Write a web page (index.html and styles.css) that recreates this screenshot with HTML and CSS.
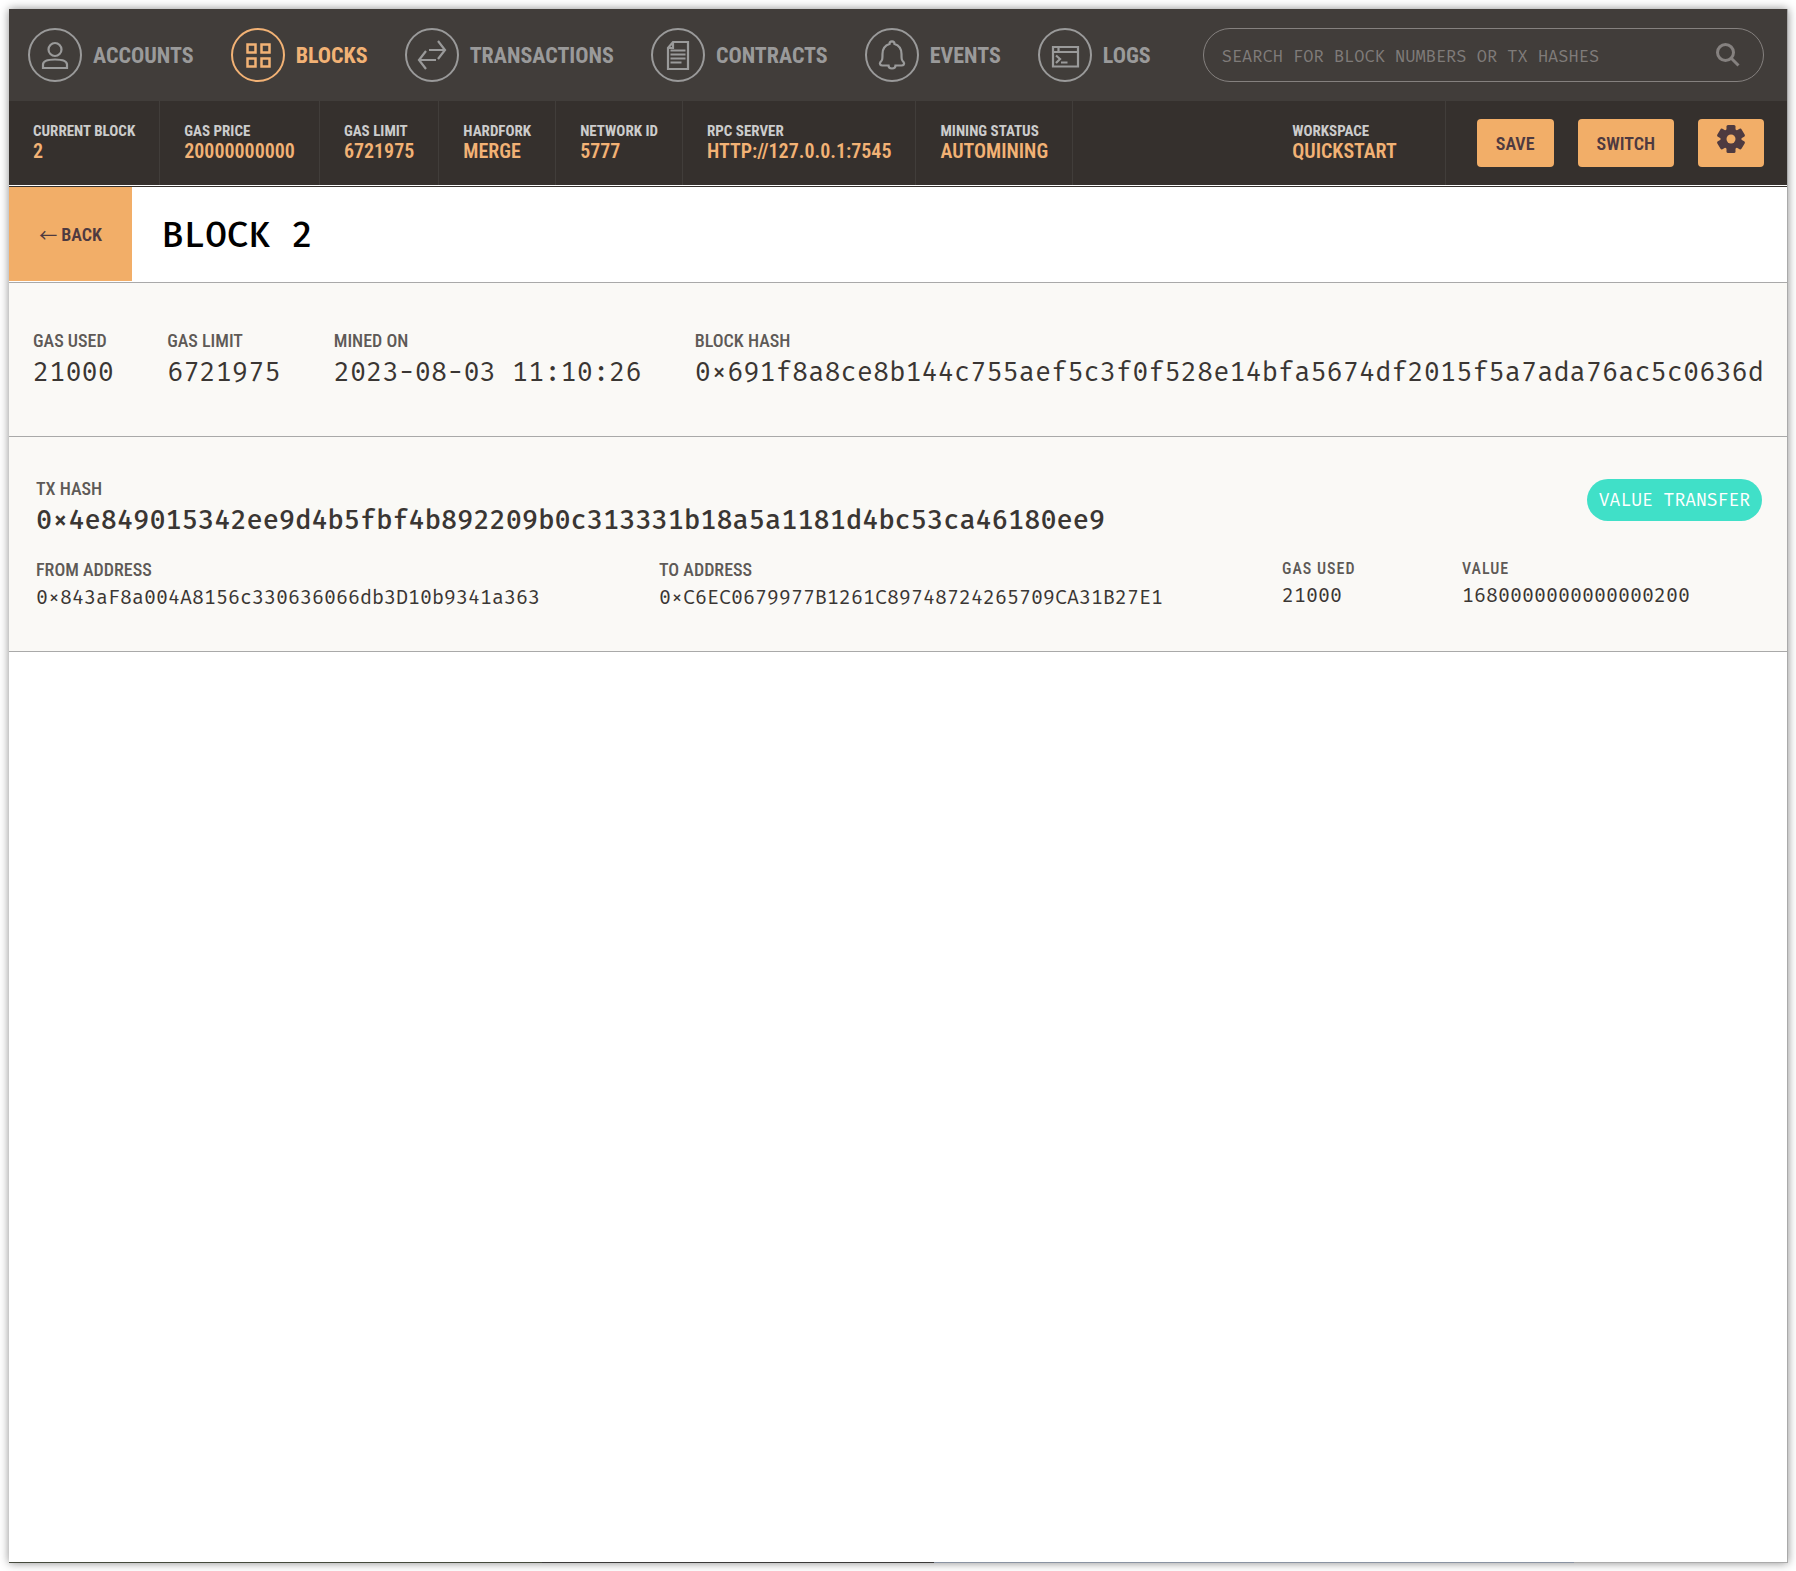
FILE: index.html
```
<!DOCTYPE html>
<html lang="en">
<head>
<meta charset="utf-8">
<title>Block 2</title>
<link rel="stylesheet" href="styles.css">
</head>
<body>
<div class="window">
  <header>
    <nav class="nav">
      <a class="nav-item" href="#"><span class="ring"><svg viewBox="0 0 54 54"><circle cx="27" cy="21.500" r="6.500"/><path d="M15 40v-3.500C15 33 18 31.500 27 31.500s12 1.500 12 5V40z"/></svg></span>ACCOUNTS</a>
      <a class="nav-item active" href="#"><span class="ring"><svg class="heavy" viewBox="0 0 54 54"><path d="M16.500 16.500h8v8h-8zM30.500 16.500h8v8h-8zM16.500 30.500h8v8h-8zM30.500 30.500h8v8h-8z"/></svg></span>BLOCKS</a>
      <a class="nav-item" href="#"><span class="ring"><svg viewBox="0 0 54 54"><path d="M24 22h16M33 13l7 9-7 9M31 32H14M21 23l-7 9 7 9"/></svg></span>TRANSACTIONS</a>
      <a class="nav-item" href="#"><span class="ring"><svg viewBox="0 0 54 54"><path d="M22 14h15v27H17V20zM22 14v6h-5M19.500 22.500h15M19.500 26.500h15M19.500 30.500h15M19.500 34.500h11"/></svg></span>CONTRACTS</a>
      <a class="nav-item" href="#"><span class="ring"><svg viewBox="0 0 54 54"><path d="M24.500 16c0-3.500 5-3.500 5 0 5 1.500 7 5 7 10 0 5 0 6 2 8 1.500 2 0 3.500-2 3.500h-6c0 4-7 4-7 0h-6c-2 0-3.500-1.500-2-3.500 2-2 2-3 2-8 0-5 2-8.500 7-10z"/></svg></span>EVENTS</a>
      <a class="nav-item" href="#"><span class="ring"><svg viewBox="0 0 54 54"><path d="M15 19h25v19.500H15zM15 24h25M20.500 19v5M18 27.500l4 3.500-4 4M23 34.500h6.500"/></svg></span>LOGS</a>
      <div class="search">
        <input type="text" aria-label="Search" placeholder="SEARCH FOR BLOCK NUMBERS OR TX HASHES">
        <svg viewBox="0 0 24 24"><circle cx="9.500" cy="9.500" r="8"/><path d="M15.500 15.500l7 7"/></svg>
      </div>
    </nav>
    <div class="status">
      <div class="cell"><span>CURRENT BLOCK</span><b>2</b></div>
      <div class="cell"><span>GAS PRICE</span><b>20000000000</b></div>
      <div class="cell"><span>GAS LIMIT</span><b>6721975</b></div>
      <div class="cell"><span>HARDFORK</span><b>MERGE</b></div>
      <div class="cell"><span>NETWORK ID</span><b>5777</b></div>
      <div class="cell"><span>RPC SERVER</span><b>HTTP://127.0.0.1:7545</b></div>
      <div class="cell"><span>MINING STATUS</span><b>AUTOMINING</b></div>
      <div class="cell workspace"><span>WORKSPACE</span><b>QUICKSTART</b></div>
      <div class="actions">
        <button type="button">SAVE</button>
        <button type="button">SWITCH</button>
        <button type="button" class="gear" aria-label="Settings"><svg viewBox="0 0 28 28"><circle cx="14" cy="14" r="10.500"/><rect x="9.500" width="9" height="28" rx="1.500"/><rect x="9.500" width="9" height="28" rx="1.500" transform="rotate(60 14 14)"/><rect x="9.500" width="9" height="28" rx="1.500" transform="rotate(120 14 14)"/><circle class="hole" cx="14" cy="14" r="4.500"/></svg></button>
      </div>
    </div>
  </header>
  <main>
    <div class="title"><button type="button" class="back"><span class="arrow">←</span> BACK</button><h1>BLOCK 2</h1></div>
    <section class="summary">
      <div><span class="label">GAS USED</span><span class="big">21000</span></div>
      <div><span class="label">GAS LIMIT</span><span class="big">6721975</span></div>
      <div><span class="label">MINED ON</span><span class="big">2023-08-03 11:10:26</span></div>
      <div><span class="label">BLOCK HASH</span><span class="big">0×691f8a8ce8b144c755aef5c3f0f528e14bfa5674df2015f5a7ada76ac5c0636d</span></div>
    </section>
    <section class="tx">
      <div class="tx-head">
        <div><span class="label">TX HASH</span><span class="big strong">0×4e849015342ee9d4b5fbf4b892209b0c313331b18a5a1181d4bc53ca46180ee9</span></div>
        <span class="badge">VALUE TRANSFER</span>
      </div>
      <div class="tx-grid">
        <div><span class="label">FROM ADDRESS</span><span class="value">0×843aF8a004A8156c330636066db3D10b9341a363</span></div>
        <div><span class="label">TO ADDRESS</span><span class="value">0×C6EC0679977B1261C89748724265709CA31B27E1</span></div>
        <div class="compact"><span class="label">GAS USED</span><span class="value">21000</span></div>
        <div class="compact"><span class="label">VALUE</span><span class="value">1680000000000000200</span></div>
      </div>
    </section>
  </main>
  <div class="edge"></div>
</div>
</body>
</html>
```
FILE: styles.css
```
* { box-sizing: border-box; }
:root {
  --cond: "Roboto Condensed", "Liberation Sans Narrow", "Roboto", sans-serif;
  --mono: "Fira Mono", "Liberation Mono", monospace;
}
body { margin: 0; padding: 9px 8px 8px 9px; min-height: 100vh; display: flex; background: #fff; font-family: var(--cond); color: #3a3633; }
.window { flex: 1; min-width: 0; display: flex; flex-direction: column; background: #fff; border-right: 1px solid #aaa; box-shadow: 0 0 9px rgba(0,0,0,.45); }
.nav { display: flex; align-items: center; gap: 37px; height: 92px; padding: 0 23px 0 19px; background: #413d3a; }
.nav-item { display: flex; align-items: center; gap: 11px; color: #9a9a9a; font-size: 22px; font-weight: 700; text-decoration: none; white-space: nowrap; }
.nav-item.active { color: #f2b275; }
.ring { width: 54px; height: 54px; border: 2px solid; border-radius: 50%; flex: none; }
.ring svg { display: block; width: 54px; height: 54px; margin: -2px; fill: none; stroke: currentColor; stroke-width: 2.2; }
.ring .heavy { stroke-width: 2.5; }
.search { flex: 1; display: flex; align-items: center; height: 54px; margin-left: 15px; padding: 0 23px 0 18px; border: 1px solid #85817f; border-radius: 27px; }
.search input { flex: 1; min-width: 0; padding: 2px 0 0; border: 0; outline: 0; background: none; font: 17px var(--mono); color: #ccc; }
.search input::placeholder { color: #7f7b79; opacity: 1; }
.search svg { width: 24px; height: 24px; fill: none; stroke: #85817f; stroke-width: 3; }
.status { display: flex; height: 84px; background: #35302d; }
.cell { display: flex; flex-direction: column; justify-content: center; padding: 0 24px 3px; border-right: 1px solid #413d3a; white-space: nowrap; font-weight: 700; }
.cell span { font-size: 15px; line-height: 20px; color: #ccc; }
.cell b { font-size: 20px; line-height: 21px; font-weight: 600; color: #f2b275; }
.workspace { margin-left: auto; padding-right: 48px; }
.actions { display: flex; align-items: center; gap: 24px; padding: 0 23px 0 31px; }
button { border: 0; background: #f2ae68; color: #4e3a40; font: 600 18px var(--cond); white-space: nowrap; }
.actions button { height: 48px; padding: 0 19px; border-radius: 4px; }
.actions .gear { padding-bottom: 8px; }
.gear svg { display: block; width: 28px; height: 28px; fill: currentColor; }
.gear .hole { fill: #f2ae68; }
main { flex: 1; border-top: 1px solid #35302d; margin-top: 1px; }
.title { display: flex; height: 96px; border-bottom: 1px solid #a9a9a9; }
.back { display: flex; align-items: center; justify-content: center; gap: 4px; width: 123px; margin-bottom: 1px; }
.arrow { font: 18px "Noto Sans CJK JP", sans-serif; }
h1 { margin: 0 0 0 30px; align-self: center; font: 500 36px var(--mono); color: #000; }
.label { display: block; font-size: 18px; line-height: 24px; font-weight: 500; color: #5e5a57; }
.big { display: block; font: 27px/38px var(--mono); white-space: nowrap; }
.strong { font-weight: 500; }
.summary { display: flex; justify-content: space-between; height: 154px; padding: 46px 23px 0 24px; background: #faf9f6; border-bottom: 1px solid #a9a9a9; }
.tx { height: 215px; padding: 40px 25px 0 27px; background: #faf9f6; border-bottom: 1px solid #a9a9a9; }
.tx-head { display: flex; justify-content: space-between; align-items: flex-start; }
.badge { margin-top: 2px; padding: 1px 12px 0; border-radius: 21px; background: #40e0c8; color: #fff; font: 18px/41px var(--mono); }
.tx-grid { display: grid; grid-template-columns: 623fr 623fr 180fr 300fr; margin-top: 19px; }
.value { display: block; font: 20px/30px var(--mono); white-space: nowrap; }
.compact .label { font-size: 16px; line-height: 22px; letter-spacing: 1px; }
.edge { height: 1px; background: linear-gradient(90deg, #454a3c 0 30%, #3b3a39 30% 52%, #8a93a2 52% 88%, #aaa 88%); }
```
